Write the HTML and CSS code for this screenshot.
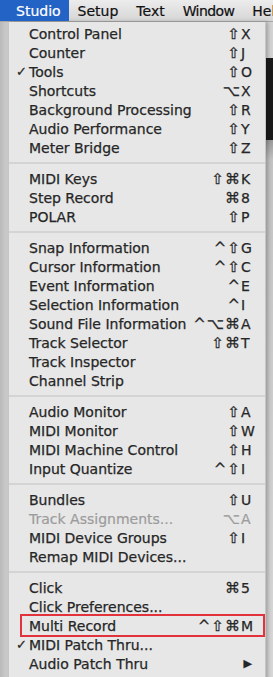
FILE: index.html
```html
<!DOCTYPE html>
<html lang="en">
<head>
    <meta charset="UTF-8">
    <meta name="viewport" content="width=device-width, initial-scale=1.0">
    <title>Studio Menu</title>
    <link rel="stylesheet" href="styles.css">
</head>
<body>
    <header class="menubar">
        <span class="menubar-item active">Studio</span>
        <span class="menubar-item">Setup</span>
        <span class="menubar-item">Text</span>
        <span class="menubar-item">Window</span>
        <span class="menubar-item">Hel</span>
    </header>

    <ul class="menu">
        <li class="item"><span class="label">Control Panel</span><span class="keys"><span class="mods">⇧</span><span class="key">X</span></span></li>
        <li class="item"><span class="label">Counter</span><span class="keys"><span class="mods">⇧</span><span class="key">J</span></span></li>
        <li class="item checked"><span class="label">Tools</span><span class="keys"><span class="mods">⇧</span><span class="key">O</span></span></li>
        <li class="item"><span class="label">Shortcuts</span><span class="keys"><span class="mods">⌥</span><span class="key">X</span></span></li>
        <li class="item"><span class="label">Background Processing</span><span class="keys"><span class="mods">⇧</span><span class="key">R</span></span></li>
        <li class="item"><span class="label">Audio Performance</span><span class="keys"><span class="mods">⇧</span><span class="key">Y</span></span></li>
        <li class="item"><span class="label">Meter Bridge</span><span class="keys"><span class="mods">⇧</span><span class="key">Z</span></span></li>
        <li class="separator"></li>
        <li class="item"><span class="label">MIDI Keys</span><span class="keys"><span class="mods">⇧⌘</span><span class="key">K</span></span></li>
        <li class="item"><span class="label">Step Record</span><span class="keys"><span class="mods">⌘</span><span class="key">8</span></span></li>
        <li class="item"><span class="label">POLAR</span><span class="keys"><span class="mods">⇧</span><span class="key">P</span></span></li>
        <li class="separator"></li>
        <li class="item"><span class="label">Snap Information</span><span class="keys"><span class="mods">^⇧</span><span class="key">G</span></span></li>
        <li class="item"><span class="label">Cursor Information</span><span class="keys"><span class="mods">^⇧</span><span class="key">C</span></span></li>
        <li class="item"><span class="label">Event Information</span><span class="keys"><span class="mods">^</span><span class="key">E</span></span></li>
        <li class="item"><span class="label">Selection Information</span><span class="keys"><span class="mods">^</span><span class="key">I</span></span></li>
        <li class="item"><span class="label">Sound File Information</span><span class="keys"><span class="mods">^⌥⌘</span><span class="key">A</span></span></li>
        <li class="item"><span class="label">Track Selector</span><span class="keys"><span class="mods">⇧⌘</span><span class="key">T</span></span></li>
        <li class="item"><span class="label">Track Inspector</span></li>
        <li class="item"><span class="label">Channel Strip</span></li>
        <li class="separator"></li>
        <li class="item"><span class="label">Audio Monitor</span><span class="keys"><span class="mods">⇧</span><span class="key">A</span></span></li>
        <li class="item"><span class="label">MIDI Monitor</span><span class="keys"><span class="mods">⇧</span><span class="key">W</span></span></li>
        <li class="item"><span class="label">MIDI Machine Control</span><span class="keys"><span class="mods">⇧</span><span class="key">H</span></span></li>
        <li class="item"><span class="label">Input Quantize</span><span class="keys"><span class="mods">^⇧</span><span class="key">I</span></span></li>
        <li class="separator"></li>
        <li class="item"><span class="label">Bundles</span><span class="keys"><span class="mods">⇧</span><span class="key">U</span></span></li>
        <li class="item disabled"><span class="label">Track Assignments...</span><span class="keys"><span class="mods">⌥</span><span class="key">A</span></span></li>
        <li class="item"><span class="label">MIDI Device Groups</span><span class="keys"><span class="mods">⇧</span><span class="key">I</span></span></li>
        <li class="item"><span class="label">Remap MIDI Devices...</span></li>
        <li class="separator"></li>
        <li class="item"><span class="label">Click</span><span class="keys"><span class="mods">⌘</span><span class="key">5</span></span></li>
        <li class="item"><span class="label">Click Preferences...</span></li>
        <li class="item marked"><span class="label">Multi Record</span><span class="keys"><span class="mods">^⇧⌘</span><span class="key">M</span></span></li>
        <li class="item checked"><span class="label">MIDI Patch Thru...</span></li>
        <li class="item"><span class="label">Audio Patch Thru</span><span class="submenu">▶</span></li>
    </ul>
</body>
</html>
```

FILE: styles.css
```css
* {
    margin: 0;
    padding: 0;
    box-sizing: border-box;
}

body {
    font-family: 'DejaVu Sans', 'Liberation Sans', sans-serif;
    font-size: 14px;
    color: #222;
    height: 677px;
    overflow: hidden;
    background:
        linear-gradient(to right, #b9b9b9 0, #cfcfcf 8px, transparent 8px),
        linear-gradient(to bottom, #d4d4d4 0, #d4d4d4 58px, #1b1b1b 58px, #1b1b1b 140px, #9a9a9a 140px, #c4c4c4 160px, #d8d8d8 100%);
}

.menubar {
    display: flex;
    height: 22px;
    background: linear-gradient(to bottom, #ececec, #d6d6d6);
    border-bottom: 1px solid #a8a8a8;
    white-space: nowrap;
    overflow: hidden;
}

.menubar-item {
    padding: 0 9px;
    line-height: 22px;
    color: #111;
    -webkit-text-stroke: 0.2px #111;
}

.menubar-item:nth-child(4) {
    letter-spacing: -0.6px;
}

.menubar-item.active {
    background-color: #2363c6;
    color: #fff;
    -webkit-text-stroke: 0.2px #fff;
    padding: 0 8px 0 16px;
}

.menu {
    list-style: none;
    width: 258px;
    margin-left: 8px;
    padding-top: 2px;
    background-color: #e7e7e7;
    border-left: 1px solid #c6c6c6;
    border-right: 1px solid #c6c6c6;
    min-height: 660px;
    box-shadow: 2px 0 4px rgba(0, 0, 0, 0.25);
}

.item {
    position: relative;
    display: flex;
    align-items: center;
    height: 19px;
    padding: 0 11px 0 20px;
    color: #262626;
    -webkit-text-stroke: 0.25px #262626;
}

.item .label {
    flex: 1;
    white-space: nowrap;
}

.keys {
    display: flex;
    align-items: center;
}

.mods {
    font-size: 15px;
    letter-spacing: 1px;
}

.key {
    width: 13px;
}

.checked::before {
    content: '✓';
    position: absolute;
    left: 7px;
    font-size: 13px;
}

.disabled {
    color: #9c9c9c;
    -webkit-text-stroke: 0.2px #9c9c9c;
}

/* red annotation box drawn over the row */
.marked::after {
    content: '';
    position: absolute;
    top: -2px;
    bottom: -2px;
    left: 11px;
    right: 0;
    border: 2px solid #e2323b;
}

.submenu {
    font-size: 11px;
    margin-right: 2px;
}

.separator {
    height: 12px;
    border-top: 5px solid transparent;
    border-bottom: 5px solid transparent;
    background-color: #d4d4d4;
    background-clip: padding-box;
}
```
